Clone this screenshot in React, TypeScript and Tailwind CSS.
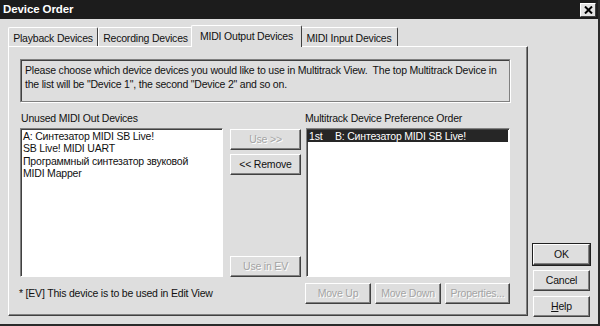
import React from "react";

const raised =
  "border border-t-white border-l-white border-r-[#404040] border-b-[#404040] shadow-[inset_-1px_-1px_0_#808080] bg-[#dedede]";
const sunken =
  "border border-t-[#808080] border-l-[#808080] border-r-white border-b-white shadow-[inset_1px_1px_0_#404040]";

function Btn({
  children,
  w,
  disabled,
  def,
}: {
  children: React.ReactNode;
  w: string;
  disabled?: boolean;
  def?: boolean;
}) {
  return (
    <div
      className={`${w} h-[21px] shrink-0 flex items-center justify-center text-[10.5px] leading-none ${raised} ${
        def ? "outline outline-1 outline-[#202020]" : ""
      } ${disabled ? "text-[#a4a4a4] [text-shadow:1px_1px_0_#ffffff]" : "text-[#111]"}`}
    >
      {children}
    </div>
  );
}

function Tab({ label, selected, w }: { label: string; selected?: boolean; w: string }) {
  if (selected) {
    return (
      <div
        className={`${w} h-[22px] -mb-[1px] -mx-[2px] relative z-10 bg-[#dedede] border-t border-l border-t-white border-l-white border-r border-r-[#404040] rounded-t-[2px] flex items-start justify-center pt-[3px] text-[10.5px]`}
      >
        {label}
      </div>
    );
  }
  return (
    <div
      className={`${w} h-[19px] border-t border-l border-t-white border-l-white border-r border-r-[#404040] rounded-t-[2px] flex items-start justify-center pt-[3px] text-[10.5px]`}
    >
      {label}
    </div>
  );
}

export default function App() {
  return (
    <div className="w-[600px] h-[326px] bg-[#dedede] flex flex-col border-r-2 border-b-2 border-r-[#2a2a2a] border-b-[#2a2a2a] font-['Liberation_Sans',Arial,sans-serif] tracking-[-0.2px] text-[#111] overflow-hidden">
      {/* title bar */}
      <div className="h-[19px] shrink-0 bg-[#1c1c1c] flex items-center pl-[3px] pr-[2px]">
        <span className="text-white font-bold text-[11.5px] leading-none tracking-[-0.1px]">Device Order</span>
        <div className="ml-auto w-[16px] h-[14px] bg-[#e2e2e2] border border-t-white border-l-white border-r-[#404040] border-b-[#404040] flex items-center justify-center">
          <svg width="9" height="8" viewBox="0 0 9 8">
            <path d="M1 0.5 L8 7.5 M8 0.5 L1 7.5" stroke="#000" strokeWidth="2" />
          </svg>
        </div>
      </div>

      {/* body */}
      <div className="flex flex-1 pl-[8px] pt-[6px] pb-[7px]">
        <div className="w-[520px] flex flex-col">
          {/* tabs */}
          <div className="h-[21px] flex items-end">
            <Tab label="Playback Devices" w="w-[90px]" />
            <Tab label="Recording Devices" w="w-[95px]" />
            <Tab label="MIDI Output Devices" w="w-[111px]" selected />
            <Tab label="MIDI Input Devices" w="w-[98px]" />
          </div>
          {/* panel */}
          <div className="h-[270px] border-t border-l border-t-white border-l-white border-r border-b border-r-[#404040] border-b-[#404040] shadow-[inset_-1px_-1px_0_#808080] pl-[11px] pt-[12px] flex flex-col">
            <div className="w-[490px] h-[43px] border border-[#808080] shadow-[inset_1px_1px_0_#404040,1px_1px_0_#ffffff] px-[4px] pt-[3px] text-[10.5px] leading-[14px] whitespace-nowrap">
              <div>
                Please choose which device devices you would like to use in Multitrack View.&nbsp; The top Multitrack Device in
              </div>
              <div>the list will be "Device 1", the second "Device 2" and so on.</div>
            </div>

            <div className="mt-[9px] h-[15px] flex text-[10.5px] leading-[15px]">
              <div className="w-[285px] pl-[1px]">Unused MIDI Out Devices</div>
              <div>Multitrack Device Preference Order</div>
            </div>

            <div className="mt-[2px] h-[149px] flex">
              <div className={`w-[203px] h-full bg-white ${sunken} pt-[1px] pl-[2px] text-[10.5px] leading-[12.3px]`}>
                <div>A: Синтезатор MIDI SB Live!</div>
                <div>SB Live! MIDI UART</div>
                <div>Программный синтезатор звуковой</div>
                <div>MIDI Mapper</div>
              </div>
              <div className="ml-[7px] w-[71px] flex flex-col">
                <div className="mt-[1px]">
                  <Btn w="w-[71px]" disabled>
                    Use &gt;&gt;
                  </Btn>
                </div>
                <div className="mt-[4px]">
                  <Btn w="w-[71px]">&lt;&lt; Remove</Btn>
                </div>
                <div className="mt-auto">
                  <Btn w="w-[71px]" disabled>
                    Use in EV
                  </Btn>
                </div>
              </div>
              <div className={`ml-[5px] w-[204px] h-full bg-white ${sunken} pt-[1px] pr-[1px] text-[10.5px] leading-[12px]`}>
                <div className="h-[12px] bg-[#262626] text-white flex">
                  <span className="w-[28px] pl-[2px]">1st</span>
                  <span>B: Синтезатор MIDI SB Live!</span>
                </div>
              </div>
            </div>

            <div className="mt-[6px] h-[21px] flex items-center">
              <div className="w-[286px] text-[10.5px] -ml-[1px]">* [EV] This device is to be used in Edit View</div>
              <Btn w="w-[66px]" disabled>
                Move Up
              </Btn>
              <div className="ml-[4px]">
                <Btn w="w-[66px]" disabled>
                  Move Down
                </Btn>
              </div>
              <div className="ml-[4px]">
                <Btn w="w-[65px]" disabled>
                  Properties...
                </Btn>
              </div>
            </div>
          </div>
        </div>

        {/* right buttons */}
        <div className="ml-[5px] w-[57px] flex flex-col justify-end gap-[5px]">
          <Btn w="w-[57px]" def>
            OK
          </Btn>
          <Btn w="w-[57px]">Cancel</Btn>
          <Btn w="w-[57px]">
            <span>
              <span className="underline">H</span>elp
            </span>
          </Btn>
        </div>
      </div>
    </div>
  );
}
